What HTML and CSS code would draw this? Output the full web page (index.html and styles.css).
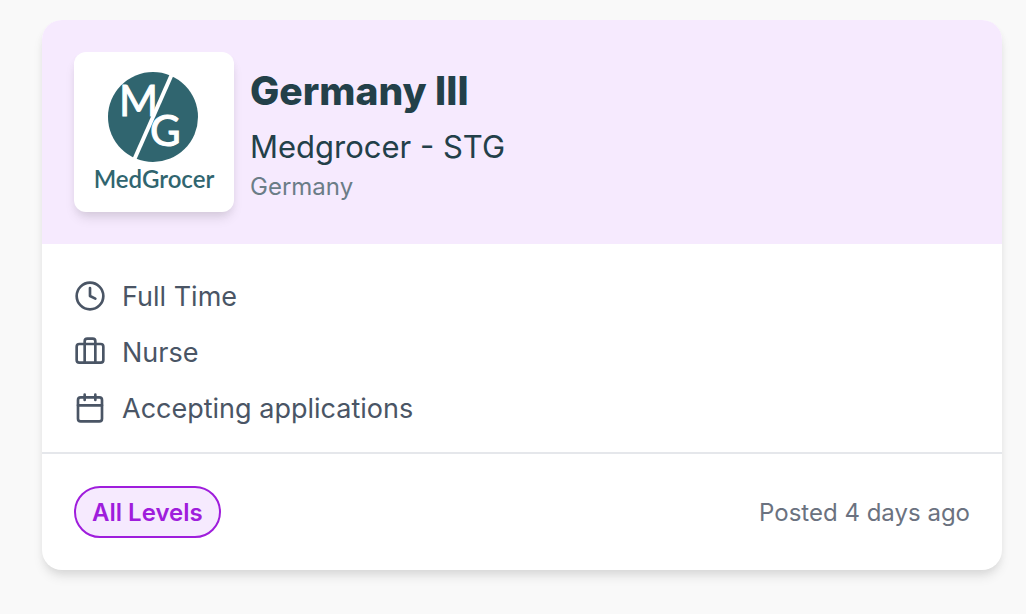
FILE: index.html
```html
<!DOCTYPE html>
<html lang="en">
<head>
<meta charset="utf-8">
<meta name="viewport" content="width=device-width, initial-scale=1">
<title>Germany III</title>
<link rel="stylesheet" href="styles.css">
</head>
<body>
<article class="card">
  <header class="card-header">
    <svg class="logo" viewBox="0 0 160 160" role="img" aria-label="MedGrocer">
      <circle class="logo-disc" cx="79" cy="65" r="45"/>
      <path class="logo-slash" d="M98 22 60 108"/>
      <text class="logo-letter"><tspan x="45" y="64">M</tspan><tspan x="76" y="94">G</tspan></text>
      <text class="logo-name" x="80" y="136">MedGrocer</text>
    </svg>
    <div class="heading">
      <h1 class="title">Germany III</h1>
      <p class="company">Medgrocer - STG</p>
      <p class="place">Germany</p>
    </div>
  </header>
  <ul class="details">
    <li class="detail">
      <svg class="icon" viewBox="0 0 24 24" aria-hidden="true"><circle cx="12" cy="12" r="10"/><path d="M12 6v6l4 2"/></svg>
      <span class="detail-text">Full Time</span>
    </li>
    <li class="detail">
      <svg class="icon" viewBox="0 0 24 24" aria-hidden="true"><rect x="2" y="6" width="20" height="14" rx="2"/><path d="M16 20V4a2 2 0 0 0-2-2h-4a2 2 0 0 0-2 2v16"/></svg>
      <span class="detail-text">Nurse</span>
    </li>
    <li class="detail">
      <svg class="icon" viewBox="0 0 24 24" aria-hidden="true"><rect x="3" y="4" width="18" height="18" rx="2"/><path d="M16 2v4M8 2v4M3 10h18"/></svg>
      <span class="detail-text">Accepting applications</span>
    </li>
  </ul>
  <footer class="card-footer">
    <span class="badge">All Levels</span>
    <span class="posted">Posted 4 days ago</span>
  </footer>
</article>
</body>
</html>
```
FILE: styles.css
```css
* { box-sizing: border-box; }
body {
  margin: 0;
  padding: 20px 24px 44px 42px;
  background: #f9f9f9;
  font-family: Inter, "Liberation Sans", sans-serif;
}
h1, p, ul { margin: 0; padding: 0; }
.card {
  border-radius: 20px;
  background: #fff;
  box-shadow: 0 8px 12px -2px rgba(0, 0, 0, .1), 0 4px 8px -2px rgba(0, 0, 0, .06);
}
.card-header {
  display: flex;
  align-items: center;
  gap: 16px;
  padding: 32px;
  border-radius: 20px 20px 0 0;
  background: #f6eafe;
  color: #234049;
}
.logo {
  flex: none;
  width: 160px;
  height: 160px;
  border-radius: 12px;
  background: #fff;
  box-shadow: 0 8px 12px -2px rgba(0, 0, 0, .1), 0 4px 8px -2px rgba(0, 0, 0, .06);
}
.logo-disc { fill: #30656f; }
.logo-slash { stroke: #fff; stroke-width: 4; }
.logo-letter { fill: #fff; stroke: #fff; stroke-width: 1; font: 400 42px Lato, sans-serif; }
.logo-name { fill: #30656f; font: 600 24px Lato, sans-serif; text-anchor: middle; }
.heading { padding-top: 2px; }
.title { font-size: 39px; line-height: 56px; font-weight: 800; }
.company { font-size: 31px; line-height: 48px; padding-top: 4px; }
.place { font-size: 24px; line-height: 32px; color: #6b7d87; }
.details {
  display: grid;
  gap: 16px;
  padding: 32px 32px 24px;
  list-style: none;
  color: #4a5565;
  font-size: 27px;
  line-height: 38px;
}
.detail { display: flex; align-items: center; gap: 16px; }
.detail-text { padding-top: 2px; }
.icon {
  flex: none;
  width: 32px;
  height: 32px;
  fill: none;
  stroke: currentColor;
  stroke-width: 2;
  stroke-linecap: round;
  stroke-linejoin: round;
}
.card-footer {
  display: flex;
  align-items: center;
  justify-content: space-between;
  padding: 32px;
  border-top: 2px solid #e5e7eb;
  font-size: 24px;
  line-height: 32px;
}
.badge {
  padding: 9px 16px 7px;
  border: 2px solid #9f1ddc;
  border-radius: 26px;
  background: #f6eafe;
  color: #9f1ddc;
  font-weight: 600;
}
.posted { padding-top: 2px; color: #6b7280; }
```
